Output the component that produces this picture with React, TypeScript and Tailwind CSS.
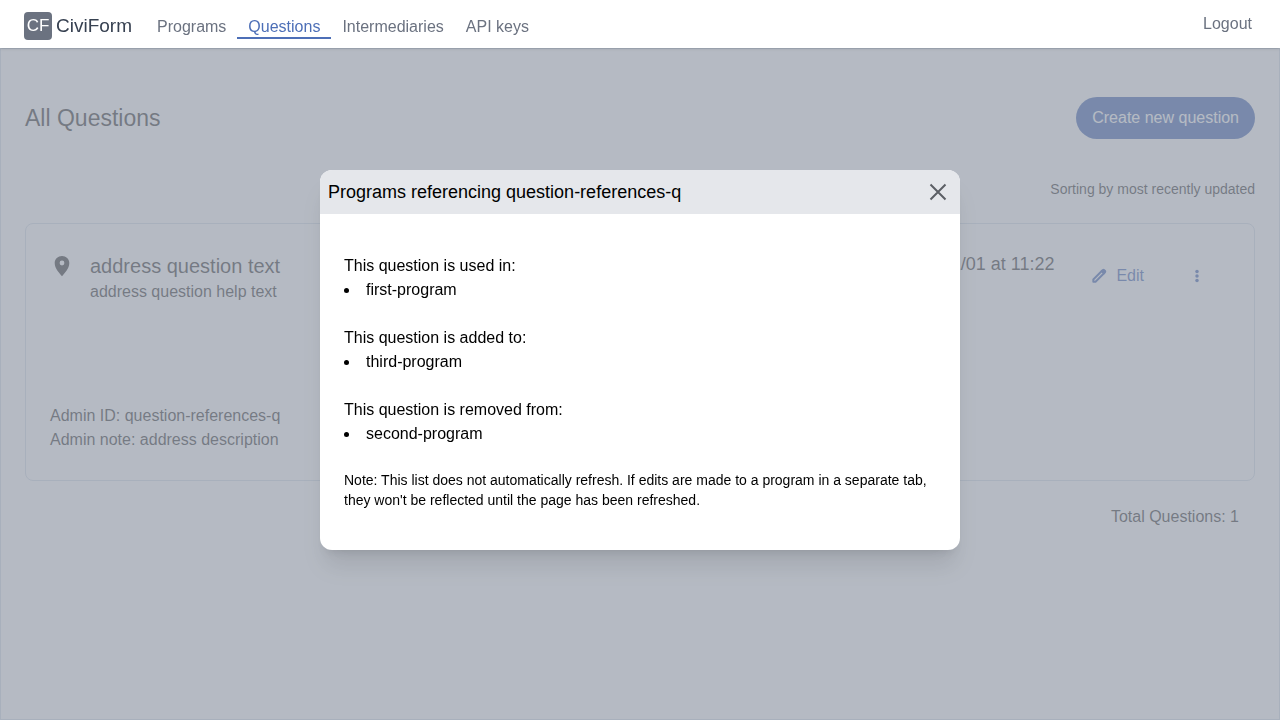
import React from "react";

const navItems = [
  { label: "Programs", active: false },
  { label: "Questions", active: true },
  { label: "Intermediaries", active: false },
  { label: "API keys", active: false },
];

const usages = [
  { heading: "This question is used in:", programs: ["first-program"] },
  { heading: "This question is added to:", programs: ["third-program"] },
  { heading: "This question is removed from:", programs: ["second-program"] },
];

function PinIcon() {
  return (
    <svg viewBox="0 0 24 24" className="size-6 shrink-0" fill="currentColor" aria-hidden="true">
      <path d="M12 2C8 2 4.7 5.1 4.7 9c0 5.3 4.6 10.2 7.3 13.2 2.7-3 7.3-7.900 7.300-13.200 0-3.900-3.300-7-7.300-7zm0 9.400a2.400 2.400 0 0 1 0-4.800 2.400 2.400 0 0 1 0 4.800z" />
    </svg>
  );
}

function EditIcon() {
  return (
    <svg
      viewBox="0 0 24 24"
      className="size-[18px]"
      fill="none"
      stroke="currentColor"
      strokeWidth="2.6"
      strokeLinejoin="round"
      aria-hidden="true"
    >
      <path d="M4.400 16.600L16 5l3 3L7.400 19.600h-3z" />
      <path d="M15.500 5.500L17.300 3.900q.700-.600 1.400 0l1.400 1.400q.600.700 0 1.400L18.500 8.500z" fill="currentColor" />
    </svg>
  );
}

function MoreIcon() {
  return (
    <svg viewBox="0 0 24 24" className="size-[18px]" fill="currentColor" aria-hidden="true">
      <circle cx="12" cy="6" r="2.3" />
      <circle cx="12" cy="12" r="2.3" />
      <circle cx="12" cy="18" r="2.3" />
    </svg>
  );
}

function CloseIcon() {
  return (
    <svg
      viewBox="0 0 28 28"
      className="size-7"
      fill="none"
      stroke="currentColor"
      strokeWidth="2"
      aria-hidden="true"
    >
      <path d="M6.500 6.500l15 15M21.500 6.500l-15 15" />
    </svg>
  );
}

function Header() {
  return (
    <header className="sticky top-0 z-30 flex h-12 items-center bg-white px-6 shadow">
      <div className="flex items-center gap-1 pt-1">
        <span className="flex size-7 items-center justify-center rounded bg-[#6b7280] text-[17px] text-white">
          CF
        </span>
        <span className="text-[19px] text-[#374151]">CiviForm</span>
      </div>
      <nav className="ml-3.5 flex self-end pb-[9px] leading-5">
        {navItems.map((item) => (
          <a
            key={item.label}
            href="#"
            className={
              item.active
                ? "border-b-2 border-[#4d6fb7] px-[11px] text-[#4d6fb7]"
                : "border-b-2 border-transparent px-[11px] text-[#6b7280]"
            }
          >
            {item.label}
          </a>
        ))}
      </nav>
      <a href="#" className="mr-1 ml-auto text-[#6b7280]">
        Logout
      </a>
    </header>
  );
}

function QuestionCard() {
  return (
    <article className="flex min-h-[258px] flex-col justify-between rounded-lg border border-slate-300 p-6">
      <div className="flex items-start">
        <div className="flex grow gap-4 pt-1.5">
          <PinIcon />
          <div>
            <h2 className="text-xl leading-6">address question text</h2>
            <p className="pt-0.5">address question help text</p>
          </div>
        </div>
        <p className="pt-1 text-lg leading-6">Edited on 2030/01/01 at 11:22</p>
        <div className="ml-5 flex items-center pt-2 text-[#113f9f]">
          <button type="button" className="flex h-10 items-center gap-2 px-4">
            <EditIcon />
            Edit
          </button>
          <button
            type="button"
            aria-label="More actions"
            className="mr-1 ml-2 flex h-10 items-center px-5"
          >
            <MoreIcon />
          </button>
        </div>
      </div>
      <div className="pb-1">
        <p>Admin ID: question-references-q</p>
        <p>Admin note: address description</p>
      </div>
    </article>
  );
}

function ReferencesDialog() {
  return (
    <div
      role="dialog"
      aria-labelledby="references-title"
      className="w-1/2 overflow-hidden rounded-xl bg-white shadow-xl"
    >
      <div className="flex h-11 items-center justify-between bg-gray-200 px-2">
        <h2 id="references-title" className="text-lg">
          Programs referencing question-references-q
        </h2>
        <button type="button" aria-label="Close" className="text-[#5c5f65]">
          <CloseIcon />
        </button>
      </div>
      <div className="px-6 py-10">
        {usages.map((usage) => (
          <section key={usage.heading} className="mb-6">
            <p>{usage.heading}</p>
            <ul className="list-inside list-disc">
              {usage.programs.map((program) => (
                <li key={program}>{program}</li>
              ))}
            </ul>
          </section>
        ))}
        <p className="text-sm">
          Note: This list does not automatically refresh. If edits are made to a program in a
          separate tab, they won&apos;t be reflected until the page has been refreshed.
        </p>
      </div>
    </div>
  );
}

export default function App() {
  return (
    <div className="flex min-h-screen flex-col bg-white font-['Liberation_Sans',Arial,sans-serif] text-base text-black">
      <Header />
      <main className="grow border border-slate-300 px-6">
        <div className="flex items-center justify-between pt-12">
          <h1 className="text-[23px]">All Questions</h1>
          <button type="button" className="h-[42px] rounded-full bg-[#113f9f] px-4 text-white">
            Create new question
          </button>
        </div>
        <p className="pt-10 pb-6 text-right text-sm">Sorting by most recently updated</p>
        <QuestionCard />
        <p className="pt-6 pr-4 text-right">Total Questions: 1</p>
      </main>
      <div className="fixed inset-0 z-20 flex items-center justify-center bg-[#9ca3af]/75">
        <ReferencesDialog />
      </div>
    </div>
  );
}
